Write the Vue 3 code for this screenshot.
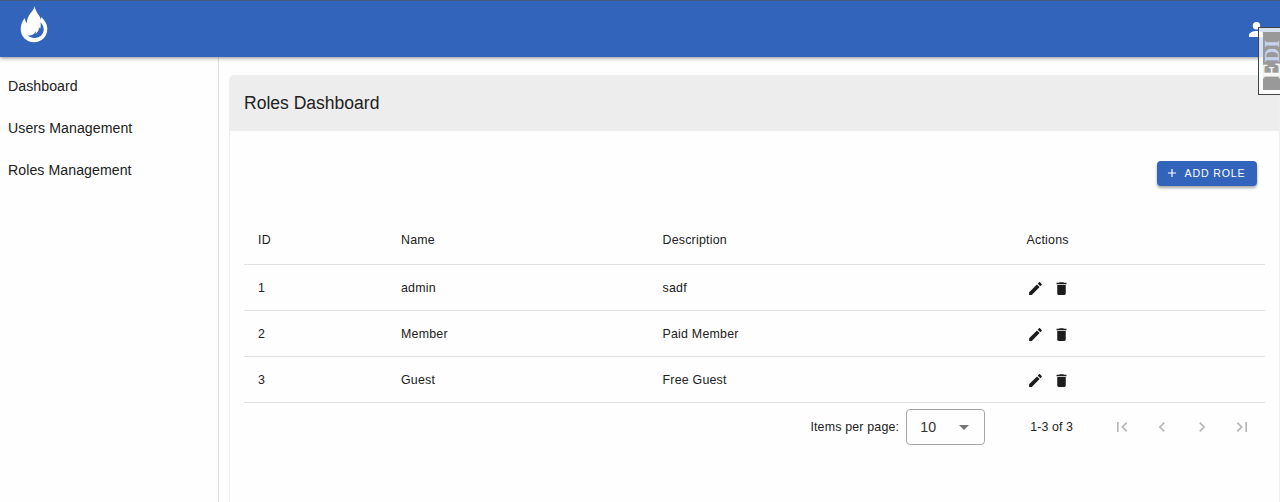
<script setup>
const links = ['Dashboard', 'Users Management', 'Roles Management']
const roles = [
  { id: 1, name: 'admin', description: 'sadf' },
  { id: 2, name: 'Member', description: 'Paid Member' },
  { id: 3, name: 'Guest', description: 'Free Guest' },
]
const pagers = [
  'M18.41,16.59L13.82,12L18.41,7.41L17,6L11,12L17,18L18.41,16.59M6,6H8V18H6V6Z',
  'M15.41,16.58L10.83,12L15.41,7.41L14,6L8,12L14,18L15.41,16.58Z',
  'M8.59,16.58L13.17,12L8.59,7.41L10,6L16,12L10,18L8.59,16.58Z',
  'M5.59,7.41L10.18,12L5.59,16.59L7,18L13,12L7,6L5.59,7.41M16,6H18V18H16V6Z',
]
</script>

<template>
  <div class="page">
    <header class="bar">
      <svg class="logo" viewBox="0 0 28 38">
        <path fill="#fff" d="M14.8 0C13.500 5.500 6.800 9 6.800 17.200C5.500 15.800 4.900 14 5 12C2.200 15 .7 18.500 .7 23C.7 30.500 6.400 36.200 14 36.200C21.500 36.200 27.300 30.500 27.300 23C27.300 18 24.500 14.500 21.300 10.800C21.500 12 21.300 12.800 20.800 13.500C19.800 8.500 15.500 7 14.800 0Z" />
        <path fill="#3164ba" d="M20.300 16.300C24.700 20 24.700 26 21.200 29.500C17.800 32.800 11.500 32.800 7.300 29.300C11 30.200 14.300 28.600 15.500 25.500C16 26.200 15.800 27.100 15.600 27.900C18.200 26.100 19.200 23.500 18.800 21.300C19.500 21.600 19.900 22.200 20.100 22.900C20.900 20.600 21 18 20.300 16.300Z" />
      </svg>
      <svg class="account" viewBox="0 0 16 16"><path fill="#fff" d="M8 0a4 4 0 1 1 0 8a4 4 0 0 1 0-8ZM8 9.500c3 0 8 1.500 8 4.500v2H0v-2c0-3 5-4.500 8-4.500Z" /></svg>
    </header>
    <div class="body">
      <nav>
        <a v-for="l in links" :key="l">{{ l }}</a>
      </nav>
      <main>
        <section class="card">
          <h1>Roles Dashboard</h1>
          <div class="content">
            <div class="toolbar">
              <button class="add">
                <svg viewBox="0 0 24 24"><path fill="currentColor" d="M19,13H13V19H11V13H5V11H11V5H13V11H19V13Z" /></svg>
                <span>ADD ROLE</span>
              </button>
            </div>
            <div class="row head">
              <span>ID</span><span>Name</span><span>Description</span><span>Actions</span>
            </div>
            <div v-for="r in roles" :key="r.id" class="row">
              <span>{{ r.id }}</span><span>{{ r.name }}</span><span>{{ r.description }}</span>
              <span class="actions">
                <svg viewBox="0 0 24 24"><path d="M20.71,7.04C21.1,6.65 21.1,6 20.71,5.63L18.37,3.29C18,2.9 17.35,2.9 16.96,3.29L15.12,5.12L18.87,8.87M3,17.25V21H6.75L17.81,9.93L14.06,6.18L3,17.25Z" /></svg>
                <svg viewBox="0 0 24 24"><path d="M19,4H15.5L14.5,3H9.5L8.5,4H5V6H19M6,19A2,2 0 0,0 8,21H16A2,2 0 0,0 18,19V7H6V19Z" /></svg>
              </span>
            </div>
            <footer>
              <span class="per">Items per page:</span>
              <div class="select"><span>10</span><svg viewBox="0 0 10 5"><path fill="#757575" d="M0 0H10L5 5Z" /></svg></div>
              <span class="range">1-3 of 3</span>
              <div class="pager">
                <svg v-for="p in pagers" :key="p" viewBox="0 0 24 24"><path :d="p" /></svg>
              </div>
            </footer>
          </div>
        </section>
      </main>
    </div>
    <div class="stamp"><div class="plate"><span class="mark">E<small>DI</small></span></div></div>
  </div>
</template>

<style>
body { margin: 0; overflow: hidden; }
</style>

<style scoped>
* { box-sizing: border-box; }
.page { position: relative; width: 1280px; height: 502px; overflow: hidden; background: #fefefe; color: #212121; font-family: "Liberation Sans", Arial, sans-serif; font-size: 12.4px; letter-spacing: .22px; display: flex; flex-direction: column; }
.bar { position: relative; z-index: 1; height: 57px; flex: none; background: #3164ba; border-top: 1px solid #48597c; display: flex; justify-content: space-between; align-items: flex-start; padding: 5px 16px 0 20px; box-shadow: 0 1px 4px rgba(0, 0, 0, .45); }
.logo { width: 28px; height: 38px; }
.account { width: 15px; height: 15px; margin-top: 16px; }
.body { flex: 1; display: flex; min-height: 0; }
nav { width: 219px; flex: none; border-right: 1px solid #dfdfe1; padding: 7.500px 8px 0; display: flex; flex-direction: column; }
nav a { height: 42.3px; line-height: 42px; font-size: 14.15px; letter-spacing: .06px; }
main { flex: 1; min-width: 0; padding: 18px 0 0 10px; display: flex; }
.card { flex: 1; border: 1px solid #efefef; border-top: 0; border-bottom: 0; border-radius: 5px 5px 0 0; overflow: hidden; }
h1 { margin: 0; height: 56px; line-height: 57px; padding-left: 14px; background: #ededed; font-size: 17.55px; font-weight: 400; letter-spacing: 0; }
.content { padding: 30px 14px 0; }
.toolbar { display: flex; justify-content: flex-end; padding-right: 8px; height: 55px; }
.add { width: 100px; height: 25px; padding: 0 0 1px 7.500px; border: 0; border-radius: 4px; background: #3164ba; color: #fff; font-family: inherit; font-size: 10.6px; letter-spacing: .84px; display: flex; align-items: center; gap: 7px; box-shadow: 0 2px 3px rgba(0, 0, 0, .35); white-space: nowrap; }
.add svg { width: 14px; height: 14px; margin-right: -1px; }
.row { height: 46px; display: grid; grid-template-columns: 143px 261.5px 364px 1fr; align-items: center; padding-left: 14px; border-bottom: 1px solid #e1e1e1; }
.row.head { height: 49px; }
.actions { display: flex; gap: 9px; padding-top: 1px; }
.actions svg { width: 17px; height: 17px; fill: #1c1c1c; }
footer { display: flex; align-items: center; height: 48px; justify-content: flex-end; }
.per { letter-spacing: .18px; }
.select { width: 79px; height: 36px; margin: 0 45px 0 7px; border: 1px solid #a6a6a6; border-radius: 4px; padding: 0 15px 0 13px; display: flex; align-items: center; justify-content: space-between; font-size: 14.2px; color: #333; }
.select svg { width: 10px; height: 5px; }
.range { letter-spacing: .1px; }
.pager { display: flex; gap: 20px; margin: 0 13px 0 39px; }
.pager svg { width: 20px; height: 20px; fill: #b7b7b7; }
.stamp { position: absolute; z-index: 2; left: 1258px; top: 27px; width: 22px; height: 68px; border: 1px solid #444; border-right: 0; background: rgba(255, 255, 255, .8); padding: 4px 0 4px 4px; }
.plate { height: 100%; background: #999; display: flex; align-items: flex-end; padding-bottom: 11px; }
.mark { width: 17px; writing-mode: vertical-rl; transform: rotate(180deg); font: bold 25px/17px "Liberation Serif", serif; letter-spacing: 0; color: #f7f7f7; white-space: nowrap; }
.mark small { font-size: 20px; line-height: 17px; color: #c5d2ee; }
</style>
